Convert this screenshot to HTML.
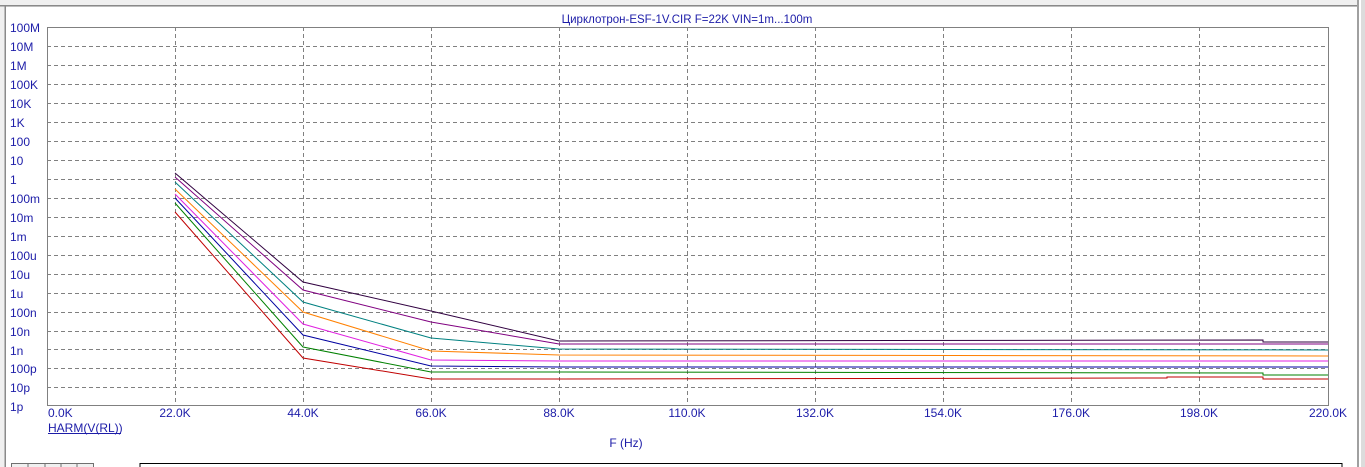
<!DOCTYPE html>
<html><head><meta charset="utf-8"><style>
html,body{margin:0;padding:0;background:#f0f0f0;}
svg{display:block;}
text{font-family:"Liberation Sans",Arial,sans-serif;fill:#1c1ca8;}
</style></head><body>
<svg width="1365" height="467" viewBox="0 0 1365 467" xmlns="http://www.w3.org/2000/svg">
<rect x="0" y="0" width="1365" height="467" fill="#f0f0f0"/>
<rect x="0" y="5" width="1357" height="1.5" fill="#8a8a8a"/>
<rect x="4.5" y="5" width="1.5" height="462" fill="#8a8a8a"/>
<rect x="6" y="7" width="1351" height="460" fill="#ffffff"/>
<rect x="1357" y="0" width="2" height="467" fill="#a0a0a0"/>
<rect x="1359" y="0" width="2" height="467" fill="#ffffff"/>
<rect x="1361" y="0" width="4" height="467" fill="#dcdcdc"/>
<text x="687" y="23" font-size="11.5" text-anchor="middle">Цирклотрон-ESF-1V.CIR F=22K VIN=1m...100m</text>
<g stroke="#808080" stroke-width="1" stroke-dasharray="4,3" fill="none">
<path d="M47 46.5H1328M47 65.5H1328M47 84.5H1328M47 103.5H1328M47 122.5H1328M47 141.5H1328M47 160.5H1328M47 179.5H1328M47 198.5H1328M47 217.5H1328M47 236.5H1328M47 255.5H1328M47 274.5H1328M47 293.5H1328M47 312.5H1328M47 331.5H1328M47 349.5H1328M47 368.5H1328M47 387.5H1328"/>
<path d="M175.5 27V405M303.5 27V405M431.5 27V405M559.5 27V405M687.5 27V405M815.5 27V405M943.5 27V405M1071.5 27V405M1199.5 27V405"/>
</g>
<rect x="47.5" y="27.5" width="1281" height="378" fill="none" stroke="#808080" stroke-width="1"/>
<g font-size="12">
<text x="10" y="32">100M</text><text x="10" y="51">10M</text><text x="10" y="70">1M</text>
<text x="10" y="89">100K</text><text x="10" y="108">10K</text><text x="10" y="127">1K</text>
<text x="10" y="146">100</text><text x="10" y="165">10</text><text x="10" y="184">1</text>
<text x="10" y="203">100m</text><text x="10" y="222">10m</text><text x="10" y="241">1m</text>
<text x="10" y="260">100u</text><text x="10" y="279">10u</text><text x="10" y="298">1u</text>
<text x="10" y="317">100n</text><text x="10" y="336">10n</text><text x="10" y="355">1n</text>
<text x="10" y="373">100p</text><text x="10" y="392">10p</text><text x="10" y="411">1p</text>
</g>
<g font-size="12" text-anchor="middle">
<text x="48" y="417" text-anchor="start">0.0K</text>
<text x="175" y="417">22.0K</text><text x="303" y="417">44.0K</text><text x="431" y="417">66.0K</text>
<text x="559" y="417">88.0K</text><text x="687" y="417">110.0K</text><text x="815" y="417">132.0K</text>
<text x="943" y="417">154.0K</text><text x="1071" y="417">176.0K</text><text x="1199" y="417">198.0K</text>
<text x="1328" y="417">220.0K</text>
</g>
<text x="48" y="432" font-size="12">HARM(V(RL))</text>
<rect x="48" y="433" width="73" height="1" fill="#1c1ca8"/>
<text x="626" y="447" font-size="12" text-anchor="middle">F (Hz)</text>
<g fill="none" stroke-width="1">
<polyline stroke="#300040" points="175,173 303,282 431,311 559,341 1263,340 1263,342 1328,342"/>
<polyline stroke="#800080" points="175,177 303,290 431,322 559,344 1328,344"/>
<polyline stroke="#008080" points="175,182 303,302 431,338 559,349 1328,350"/>
<polyline stroke="#ff8000" points="175,189 303,312 431,351 559,355 1328,356"/>
<polyline stroke="#e020e0" points="175,194 303,324 431,360 559,361 1328,361"/>
<polyline stroke="#0000a0" points="175,198 303,335 431,366 559,367 1328,367"/>
<polyline stroke="#008000" points="175,203 303,347 431,372 559,372 1263,373 1263,375 1328,375"/>
<polyline stroke="#c00000" points="175,212 303,358 431,379 559,379 1167,378 1167,377 1263,377 1263,379 1328,379"/>
</g>
<rect x="11.5" y="463.5" width="82" height="6" fill="#f0f0f0" stroke="#707070"/>
<path d="M28 464V467M45 464V467M61 464V467M77 464V467" stroke="#707070"/>
<rect x="140" y="463.5" width="1202" height="6" fill="#ffffff" stroke="#000000"/>
</svg>
</body></html>
